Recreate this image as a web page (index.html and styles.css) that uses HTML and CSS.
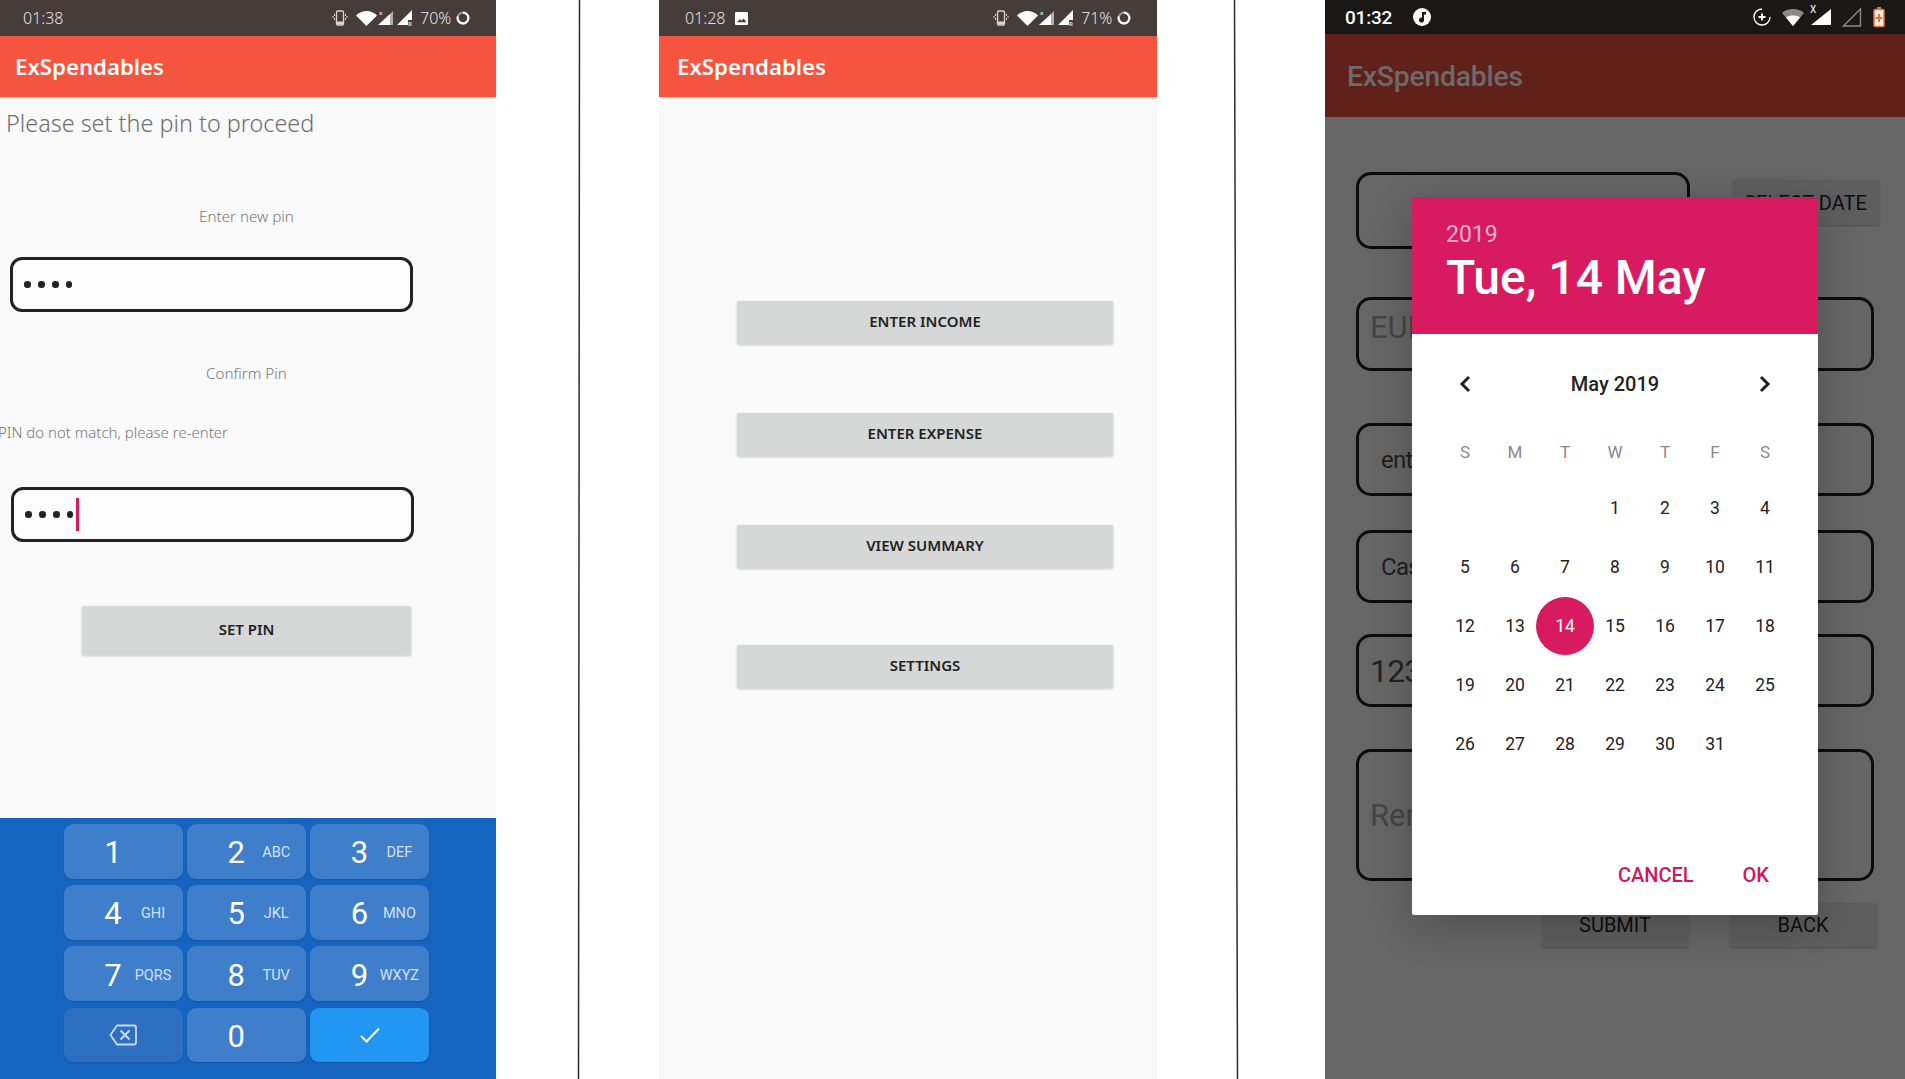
FILE: index.html
```html
<!DOCTYPE html>
<html lang="en">
<head>
<meta charset="utf-8">
<title>ExSpendables</title>
<link rel="stylesheet" href="styles.css">
</head>
<body>
<main class="canvas">

  <section class="phone phone-pin">
    <header class="status">
      <span class="time">01:38</span>
      <span class="status-icons">
        <svg class="ic-vib" viewBox="0 0 16 16"><rect x="4.500" y="1" width="7" height="14" rx="1.200" fill="none" stroke="#d8d4d2" stroke-width="1.300"/><rect x="5" y="11.500" width="6" height="3" fill="#d8d4d2"/><path d="M2.500 4v2M1 6v2M2.500 8v2M13.500 4v2M15 6v2M13.500 8v2" stroke="#d8d4d2"/></svg>
        <svg class="ic-wifi" viewBox="0 0 21 15"><path d="M10.500 15 0 4.500C3 1.500 6.500 0 10.500 0s7.500 1.500 10.500 4.500z" fill="#fff"/></svg>
        <svg class="ic-sig" viewBox="0 0 16 16"><path d="M0 15 12 4v11z" fill="#fff"/><path d="M12 4l3-3v14h-3z" fill="#b3adab"/><text x="1" y="5" class="svg-mini">x</text></svg>
        <svg class="ic-sig2" viewBox="0 0 16 16"><path d="M0 15 15 0v10h-4v5z" fill="#fff"/><text x="11" y="15.500" class="svg-mini">R</text></svg>
      </span>
      <span class="pct">70%</span>
      <svg class="ic-ring" viewBox="0 0 14 14"><circle cx="7" cy="7" r="5.400" fill="none" stroke="#9b9492" stroke-width="2.200"/><path d="M7 1.600A5.400 5.400 0 1 1 1.800 5.500" fill="none" stroke="#fff" stroke-width="2.200"/></svg>
    </header>
    <div class="appbar"><h1 class="title">ExSpendables</h1></div>
    <div class="pin-body">
      <p class="lead">Please set the pin to proceed</p>
      <p class="hint hint-new">Enter new pin</p>
      <div class="pin-field field-a"><i></i><i></i><i></i><i></i></div>
      <p class="hint hint-confirm">Confirm Pin</p>
      <p class="hint hint-error">PIN do not match, please re-enter</p>
      <div class="pin-field field-b"><i></i><i></i><i></i><i></i><b class="caret"></b></div>
      <button class="btn btn-setpin">SET PIN</button>
    </div>
    <div class="keyboard">
      <div class="key"><span class="d">1</span></div>
      <div class="key"><span class="d">2</span><span class="l">ABC</span></div>
      <div class="key"><span class="d">3</span><span class="l">DEF</span></div>
      <div class="key"><span class="d">4</span><span class="l">GHI</span></div>
      <div class="key"><span class="d">5</span><span class="l">JKL</span></div>
      <div class="key"><span class="d">6</span><span class="l">MNO</span></div>
      <div class="key"><span class="d">7</span><span class="l">PQRS</span></div>
      <div class="key"><span class="d">8</span><span class="l">TUV</span></div>
      <div class="key"><span class="d">9</span><span class="l">WXYZ</span></div>
      <div class="key key-del">
        <svg class="ic-back" viewBox="0 0 28 22"><path d="M8 1.500h17a2 2 0 0 1 2 2v15a2 2 0 0 1-2 2H8L1.500 11z" fill="none" stroke="#c9dcf3" stroke-width="1.800" stroke-linejoin="round"/><path d="M11.500 6.500l9 9M20.500 6.500l-9 9" stroke="#c9dcf3" stroke-width="2"/></svg>
      </div>
      <div class="key"><span class="d">0</span></div>
      <div class="key key-ok">
        <svg class="ic-check" viewBox="0 0 20 16"><path d="M1 9l5.500 5.500L19 1.500" fill="none" stroke="#fff" stroke-width="2"/></svg>
      </div>
    </div>
  </section>

  <section class="frame">
    <svg class="frame-lines" viewBox="0 0 670 1079" preserveAspectRatio="none"><path d="M1.500 0 0.500 1079M656.500 0 659.500 1079" stroke="#2c2c2c" stroke-width="1.500" fill="none"/></svg>
    <div class="phone phone-menu">
      <header class="status">
        <span class="time">01:28</span>
        <svg class="ic-image" viewBox="0 0 12 12"><rect width="12" height="12" rx="1" fill="#fff"/><path d="M2 9.500 4.500 6.500 6 8l2-2 2.500 3.500z" fill="#463c3a"/></svg>
        <span class="status-icons">
          <svg class="ic-vib" viewBox="0 0 16 16"><rect x="4.500" y="1" width="7" height="14" rx="1.200" fill="none" stroke="#d8d4d2" stroke-width="1.300"/><rect x="5" y="11.500" width="6" height="3" fill="#d8d4d2"/><path d="M2.500 4v2M1 6v2M2.500 8v2M13.500 4v2M15 6v2M13.500 8v2" stroke="#d8d4d2"/></svg>
          <svg class="ic-wifi" viewBox="0 0 21 15"><path d="M10.500 15 0 4.500C3 1.500 6.500 0 10.500 0s7.500 1.500 10.500 4.500z" fill="#fff"/></svg>
          <svg class="ic-sig" viewBox="0 0 16 16"><path d="M0 15 12 4v11z" fill="#fff"/><path d="M12 4l3-3v14h-3z" fill="#b3adab"/><text x="1" y="5" class="svg-mini">x</text></svg>
          <svg class="ic-sig2" viewBox="0 0 16 16"><path d="M0 15 15 0v10h-4v5z" fill="#fff"/><text x="11" y="15.500" class="svg-mini">R</text></svg>
        </span>
        <span class="pct">71%</span>
        <svg class="ic-ring" viewBox="0 0 14 14"><circle cx="7" cy="7" r="5.400" fill="none" stroke="#9b9492" stroke-width="2.200"/><path d="M7 1.600A5.400 5.400 0 1 1 1.800 5.500" fill="none" stroke="#fff" stroke-width="2.200"/></svg>
      </header>
      <div class="appbar"><h1 class="title">ExSpendables</h1></div>
      <div class="menu-body">
        <button class="btn btn-menu">ENTER INCOME</button>
        <button class="btn btn-menu gap-a">ENTER EXPENSE</button>
        <button class="btn btn-menu gap-a">VIEW SUMMARY</button>
        <button class="btn btn-menu gap-b">SETTINGS</button>
      </div>
    </div>
  </section>

  <section class="phone phone-date">
    <header class="status-dark">
      <span class="time-dark">01:32</span>
      <svg class="ic-music" viewBox="0 0 18 18"><circle cx="9" cy="9" r="9" fill="#fff"/><path d="M9 4h4v2.500h-2V12a2.500 2.500 0 1 1-2-2.400z" fill="#1a1717"/></svg>
      <span class="status-icons-dark">
        <svg class="ic-plus" viewBox="0 0 18 18"><path d="M9 1a8 8 0 1 0 8 8" fill="none" stroke="#fff" stroke-width="1.400"/><path d="M9 5.500v7M5.500 9h7" stroke="#fff" stroke-width="1.800"/></svg>
        <svg class="ic-wifi-dark" viewBox="0 0 22 18"><path d="M11 18 0 5C3 2 7 1 11 1s8 1 11 4z" fill="#8a8a8a"/><path d="M11 18 4 9.500C6 8 8.500 7.500 11 7.500s5 .5 7 2z" fill="#fff"/></svg>
        <svg class="ic-sig-dark" viewBox="0 0 22 22"><path d="M1 21 21 5v16z" fill="#fff"/><text x="0" y="9" class="svg-x">X</text></svg>
        <svg class="ic-sig-empty" viewBox="0 0 20 20"><path d="M1.500 19 18.500 2v17z" fill="none" stroke="#8a8a8a" stroke-width="1.400"/></svg>
        <svg class="ic-batt" viewBox="0 0 12 20"><path d="M4 0h4v2H4z" fill="#e8703a"/><rect x="1" y="2.500" width="10" height="17" rx="1" fill="#f7efe9" stroke="#e8703a" stroke-width="1.500"/><path d="M6 7v8M2.500 11h7" stroke="#e8703a" stroke-width="2"/></svg>
      </span>
    </header>
    <div class="appbar-dim"><h1 class="title-dim">ExSpendables</h1></div>
    <div class="form">
      <div class="form-top">
        <div class="box box-date"></div>
        <div class="dim-btn btn-select">SELECT DATE</div>
      </div>
      <div class="box box-wide box-currency">EUR</div>
      <div class="box box-wide box-text gap-3">enter</div>
      <div class="box box-wide box-text gap-4">Cash</div>
      <div class="box box-wide box-big gap-5">1234</div>
      <div class="box box-wide box-remarks">Remarks</div>
      <div class="form-actions">
        <div class="dim-btn">SUBMIT</div>
        <div class="dim-btn">BACK</div>
      </div>
    </div>

    <div class="dialog">
      <div class="dialog-head">
        <div class="dh-year">2019</div>
        <div class="dh-date">Tue, 14 May</div>
      </div>
      <div class="month-row">
        <svg class="chev" viewBox="0 0 12 18"><path d="M10 2 3 9l7 7" fill="none" stroke="#222" stroke-width="3"/></svg>
        <span class="month">May 2019</span>
        <svg class="chev" viewBox="0 0 12 18"><path d="M2 2l7 7-7 7" fill="none" stroke="#222" stroke-width="3"/></svg>
      </div>
      <div class="weekdays">
        <span>S</span><span>M</span><span>T</span><span>W</span><span>T</span><span>F</span><span>S</span>
      </div>
      <div class="days">
        <span></span><span></span><span></span><span>1</span><span>2</span><span>3</span><span>4</span>
        <span>5</span><span>6</span><span>7</span><span>8</span><span>9</span><span>10</span><span>11</span>
        <span>12</span><span>13</span><span class="sel">14</span><span>15</span><span>16</span><span>17</span><span>18</span>
        <span>19</span><span>20</span><span>21</span><span>22</span><span>23</span><span>24</span><span>25</span>
        <span>26</span><span>27</span><span>28</span><span>29</span><span>30</span><span>31</span><span></span>
      </div>
      <div class="dialog-actions">
        <span>CANCEL</span>
        <span>OK</span>
      </div>
    </div>
  </section>

</main>
</body>
</html>
```
FILE: styles.css
```css
* { box-sizing: border-box; }
html, body { margin: 0; padding: 0; background: #fff; }
body { overflow: hidden; }
p, h1 { margin: 0; font-weight: inherit; }
svg { overflow: visible; flex: none; }

.canvas {
  display: flex;
  width: 1905px;
  height: 1079px;
  overflow: hidden;
  font-family: "Noto Sans", "Open Sans", sans-serif;
}

.phone { display: flex; flex-direction: column; background: #fafafa; height: 1079px; }
.phone-pin { width: 496px; flex: none; }

/* status bars */
.status {
  display: flex;
  align-items: center;
  height: 36px;
  flex: none;
  padding: 0 26px 0 23px;
  background: #463c3a;
  color: #e6e2e0;
  font-size: 16px;
  font-weight: 300;
}
.phone-menu .status { padding-left: 26px; }
.time { width: 41px; }
.ic-image { width: 13px; height: 13px; margin-left: 9px; }
.status-icons { display: flex; align-items: center; margin-left: auto; }
.ic-vib { width: 16px; height: 16px; }
.ic-wifi { width: 21px; height: 15px; margin-left: 8px; }
.ic-sig { width: 16px; height: 16px; margin-left: 1px; }
.ic-sig2 { width: 16px; height: 16px; margin-left: 3px; }
.svg-mini { font: 700 6px "Noto Sans", sans-serif; fill: #d8d4d2; }
.pct { width: 30px; margin-left: 7px; font-size: 16px; white-space: nowrap; }
.ic-ring { width: 14px; height: 14px; margin-left: 6px; }

.appbar {
  height: 61px;
  flex: none;
  display: flex;
  align-items: center;
  padding: 0 0 1px 15px;
  background: #f5553f;
  box-shadow: 0 1px 2px rgba(0, 0, 0, .15);
  position: relative;
}
.phone-menu .appbar { padding-left: 18px; }
.title { font-size: 22.200px; font-weight: 600; color: #fff; }

/* pin screen */
.pin-body { flex: 1; display: flex; flex-direction: column; color: #8a8a8a; }
.lead { height: 34px; line-height: 34px; margin: 9px 0 0 6px; font-size: 23.400px; font-weight: 300; color: #6f6f6f; white-space: nowrap; }
.hint { font-size: 15.200px; line-height: 20px; height: 20px; font-weight: 300; color: #777; }
.hint-new { width: 493px; margin-top: 66px; text-align: center; }
.hint-confirm { width: 493px; margin-top: 51px; text-align: center; }
.hint-error { margin: 39px 0 0 -2px; font-size: 15px; white-space: nowrap; }
.pin-field {
  display: flex;
  align-items: center;
  gap: 7.200px;
  width: 403px;
  height: 55px;
  padding-left: 11.400px;
  border: 3px solid #222;
  border-radius: 12px;
  background: #fcfcfc;
}
.pin-field i { width: 6.600px; height: 6.600px; border-radius: 50%; background: #222; }
.field-a { margin: 31px 0 0 10px; }
.field-b { margin: 45px 0 0 11px; }
.caret { width: 3px; height: 33px; margin-left: -5px; background: #d81b60; }

.btn {
  display: block;
  padding: 0 0 3px;
  border: 0;
  border-radius: 1px;
  background: #d6d7d7;
  box-shadow: 0 1px 3px rgba(0, 0, 0, .2);
  color: #222;
  font: 600 15px "Noto Sans", sans-serif;
  text-align: center;
}
.btn-setpin { width: 329px; height: 49px; margin: 64px 0 0 82px; }

/* keypad */
.keyboard {
  flex: none;
  height: 261px;
  padding: 6px 0 0 64px;
  display: grid;
  grid-template-columns: repeat(3, 118.500px);
  grid-auto-rows: 54.500px;
  column-gap: 4.700px;
  row-gap: 6.700px;
  background: #1565c0;
  font-family: Roboto, sans-serif;
}
.key {
  display: flex;
  align-items: center;
  padding: 3px 0 0 33px;
  border-radius: 9px;
  background: #3f7ecb;
  box-shadow: 0 1px 2px rgba(0, 0, 0, .15);
  color: #fff;
}
.d { width: 32px; text-align: center; font-size: 31px; }
.l { width: 48px; text-align: center; font-size: 14.500px; color: #d3e2f6; white-space: nowrap; }
.key-del { padding: 0; justify-content: center; background: #2d70c2; }
.key-ok { padding: 0; justify-content: center; background: #2196f3; }
.ic-back { width: 28px; height: 22px; margin-left: -1px; }
.ic-check { width: 20px; height: 16px; }

/* middle screen */
.frame {
  position: relative;
  flex: none;
  width: 670px;
  height: 1079px;
  margin-left: 82px;
  padding-left: 81px;
}
.frame-lines { position: absolute; top: 0; left: 0; width: 670px; height: 1079px; }
.phone-menu { width: 498px; }
.menu-body { flex: 1; display: flex; flex-direction: column; padding: 204px 0 0 78px; }
.btn-menu { width: 376px; height: 43px; }
.gap-a { margin-top: 69px; }
.gap-b { margin-top: 77px; }

/* date screen */
.phone-date {
  position: relative;
  width: 580px;
  flex: none;
  margin-left: auto;
  background: #666;
  font-family: Roboto, sans-serif;
}
.status-dark {
  flex: none;
  display: flex;
  align-items: center;
  height: 34px;
  padding: 0 20px;
  background: #1a1717;
  color: #fff;
}
.time-dark { width: 50px; font-size: 19px; font-weight: 500; letter-spacing: -.2px; }
.ic-music { width: 18px; height: 18px; margin-left: 18px; }
.status-icons-dark { display: flex; align-items: center; margin-left: auto; }
.ic-plus { width: 18px; height: 18px; }
.ic-wifi-dark { width: 22px; height: 18px; margin-left: 11px; }
.ic-sig-dark { width: 22px; height: 22px; margin-left: 6px; margin-top: -5px; }
.svg-x { font: 400 10px Roboto, sans-serif; fill: #fff; }
.ic-sig-empty { width: 20px; height: 20px; margin-left: 10px; }
.ic-batt { width: 12px; height: 20px; margin-left: 11px; }

.appbar-dim {
  flex: none;
  display: flex;
  align-items: center;
  height: 83px;
  padding: 2px 0 0 22px;
  background: #60211a;
}
.title-dim { font-size: 28.300px; font-weight: 500; color: #6b6b6b; letter-spacing: -.2px; }

.form { flex: 1; display: flex; flex-direction: column; align-items: flex-start; padding-left: 31px; color: #222; }
.form-top { display: flex; align-items: flex-start; margin-top: 54.500px; }
.box {
  flex: none;
  display: flex;
  align-items: center;
  border: 3px solid #0c0c0c;
  border-radius: 15px;
  overflow: hidden;
  white-space: nowrap;
}
.box-date { width: 333.500px; height: 77.500px; }
.box-wide { width: 518px; height: 73px; padding-left: 12px; }
.box-currency { height: 73.500px; margin-top: 48px; padding-bottom: 13px; padding-left: 11px; font-size: 31px; color: #454545; }
.box-text { padding: 2px 0 0 22px; font-size: 24px; letter-spacing: -.7px; color: #1f1f1f; }
.box-big { height: 73.500px; padding: 2px 0 0 11px; font-size: 32px; letter-spacing: -.8px; color: #222; }
.box-remarks { height: 132px; margin-top: 42px; padding-left: 11px; font-size: 31px; color: #454545; }
.gap-3 { margin-top: 52px; }
.gap-4 { margin-top: 34px; }
.gap-5 { margin-top: 31px; }

.dim-btn {
  display: flex;
  align-items: center;
  justify-content: center;
  width: 146px;
  height: 44px;
  background: #5e5e5e;
  box-shadow: 0 1px 2px rgba(0, 0, 0, .25);
  color: #0e0e0e;
  font-size: 20px;
}
.btn-select { height: 45px; margin: 8.500px 0 0 43px; }
.form-actions { display: flex; gap: 42px; margin: 22px 0 0 186px; }

.dialog {
  position: absolute;
  top: 197px;
  left: 87px;
  width: 406px;
  height: 718px;
  display: flex;
  flex-direction: column;
  background: #fff;
  border-radius: 2px;
  box-shadow: 0 12px 40px rgba(0, 0, 0, .22);
}
.dialog-head { flex: none; height: 137px; padding: 25px 34px 0; background: #d81b60; color: #fff; }
.dh-year { height: 26px; line-height: 26px; font-size: 23px; color: #f5b0ca; }
.dh-date { height: 58px; line-height: 58px; margin-top: 1px; font-size: 48px; font-weight: 500; white-space: nowrap; }
.month-row { display: flex; align-items: center; justify-content: space-between; height: 60px; margin: 20px 47px 0 47px; }
.month { font-size: 20px; font-weight: 500; color: #222; }
.chev { width: 12px; height: 18px; }
.weekdays, .days { display: grid; grid-template-columns: repeat(7, 50px); justify-items: center; align-items: center; margin-left: 28px; }
.weekdays { height: 40px; margin-top: 18px; font-size: 17px; color: #8a8a8a; }
.days { grid-auto-rows: 59px; margin-top: 6.500px; font-size: 17.500px; color: #222; }
.days span { display: flex; align-items: center; justify-content: center; width: 58px; height: 58px; }
.sel { border-radius: 50%; background: #d81b60; color: #fff; }
.dialog-actions {
  display: flex;
  justify-content: flex-end;
  gap: 49px;
  margin-top: auto;
  height: 40px;
  padding-right: 49px;
  margin-bottom: 20px;
  align-items: center;
  color: #d0185b;
  font-size: 20px;
  font-weight: 500;
}
```
